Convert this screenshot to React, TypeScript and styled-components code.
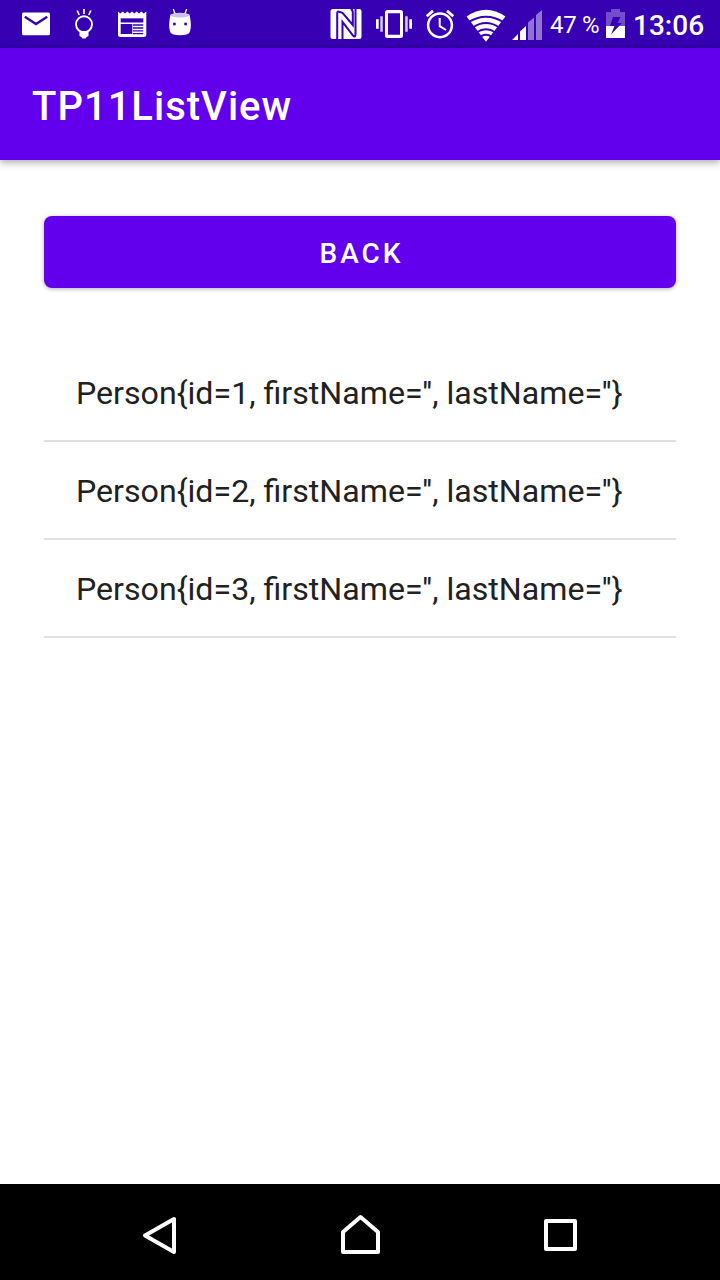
import React from "react";
import styled, { createGlobalStyle } from "styled-components";

const GlobalStyle = createGlobalStyle`
  * { box-sizing: border-box; }
  body { margin: 0; background: #fff; font-family: Roboto, "Noto Sans", sans-serif; }
`;

const Screen = styled.div`
  width: 720px;
  height: 1280px;
  display: flex;
  flex-direction: column;
  background: #fff;
  overflow: hidden;
`;

const StatusBar = styled.header`
  height: 48px;
  flex: none;
  display: flex;
  align-items: center;
  padding: 0 16px 0 12px;
  background: #3700b3;
  color: #fff;
`;

const IconGroup = styled.div<{ $push?: boolean }>`
  display: flex;
  margin-left: ${(p) => (p.$push ? "auto" : "0")};
`;

const Glyph = styled.svg`
  display: block;
  flex: none;
`;

const BatteryLevel = styled.span`
  width: 56px;
  font-size: 24px;
  letter-spacing: -0.3px;
  line-height: 48px;
  white-space: nowrap;
  padding-top: 1px;
`;

const Clock = styled.span`
  width: 71px;
  font-size: 28px;
  font-weight: 500;
  line-height: 48px;
  padding-top: 4px;
  white-space: nowrap;
`;

const AppBar = styled.div`
  height: 112px;
  flex: none;
  display: flex;
  align-items: center;
  padding: 6px 32px 0;
  background: #6200ee;
  box-shadow: 0 2px 8px rgba(0, 0, 0, 0.38);
`;

const Title = styled.h1`
  margin: 0;
  font-size: 40px;
  font-weight: 500;
  letter-spacing: 1px;
  line-height: 48px;
  color: #fff;
`;

const Content = styled.main`
  flex: 1;
  display: flex;
  flex-direction: column;
  padding: 56px 44px 0;
`;

const Button = styled.button`
  height: 72px;
  flex: none;
  border: 0;
  border-radius: 8px;
  padding: 2px 0 0 3px;
  background: #6200ee;
  color: #fff;
  font: 500 28px Roboto, sans-serif;
  letter-spacing: 3px;
  box-shadow: 0 1px 4px rgba(0, 0, 0, 0.32);
`;

const List = styled.ul`
  margin: 56px 0 0;
  padding: 0;
  list-style: none;
`;

const Row = styled.li`
  height: 98px;
  padding: 2px 32px 0;
  border-bottom: 2px solid #e0e0e0;
  font-size: 32.15px;
  line-height: 94px;
  color: #212121;
  white-space: nowrap;
`;

const NavBar = styled.nav`
  height: 96px;
  flex: none;
  display: flex;
  justify-content: center;
  background: #000;
`;

interface IconProps {
  x: number;
  w: number;
  children: React.ReactNode;
}

const StatusIcon = ({ x, w, children }: IconProps) => (
  <Glyph width={w} height={48} viewBox={`${x} 0 ${w} 48`} fill="#fff">
    {children}
  </Glyph>
);

const NavIcon = ({ x, w, children }: IconProps) => (
  <Glyph
    width={w}
    height={96}
    viewBox={`${x} 1184 ${w} 96`}
    fill="none"
    stroke="#fff"
    strokeWidth={4}
    strokeLinejoin="round"
  >
    {children}
  </Glyph>
);

const people = [1, 2, 3].map((id) => ({ id, firstName: "", lastName: "" }));

export default function App() {
  return (
    <Screen>
      <GlobalStyle />
      <StatusBar>
        <IconGroup>
          <StatusIcon x={12} w={48}>
            <rect x="22" y="12.5" width="28" height="22.7" rx="1.5" />
            <path d="M24.800 16.700 36 24l11.200-7.300" fill="none" stroke="#3700b3" strokeWidth="2.400" />
          </StatusIcon>
          <StatusIcon x={60} w={48}>
            <circle cx="84" cy="24.300" r="8" fill="none" stroke="#fff" strokeWidth="1.900" />
            <path d="M79.500 31h9v5l-2.200 1.200-.6 1.300h-3.400l-.6-1.300-2.200-1.200z" />
            <path d="M84 9v5M77.200 10.500l2 4.500M90.800 10.500l-2 4.500" fill="none" stroke="#fff" strokeWidth="1.700" />
          </StatusIcon>
          <StatusIcon x={108} w={48}>
            <path
              fillRule="evenodd"
              d="M118 11.5l2.3 2 2.4-2 2.3 2 2.4-2 2.3 2 2.3-2 2.3 2 2.4-2 2.3 2 2.4-2 2.3 2 2.6-2V34.500a2.500 2.500 0 0 1-2.500 2.500H120.500a2.500 2.500 0 0 1-2.500-2.500zM120.700 18v4.500h22.600V18zM120.700 24v10h11.600V24zM133 24.300v1.500h10.300v-1.500zM133 27.300v1.400h10.300v-1.400zM133 30.200v1.400h10.300v-1.400zM133 33v1.300h10.300V33z"
            />
            <path d="M120.700 18h22.600v1h-22.600z" opacity=".35" />
          </StatusIcon>
          <StatusIcon x={156} w={48}>
            <path d="M173.300 9l2 5.500M186.700 9l-2 5.500" stroke="#fff" strokeWidth="1.300" />
            <path d="M170.500 14.500q9.500-3.500 19 0c1.500 7 2 13 .3 17.500q-1.400 3.200-9.800 3.200t-9.800-3.200c-1.700-4.500-1.200-10.500.3-17.500z" />
            <ellipse cx="180" cy="15.200" rx="9.300" ry="2.300" fill="#cdbfec" />
            <rect x="173.100" y="22.700" width="2.600" height="2.600" fill="#3700b3" />
            <rect x="184.300" y="22.700" width="2.600" height="2.600" fill="#3700b3" />
          </StatusIcon>
        </IconGroup>
        <IconGroup $push>
          <StatusIcon x={322} w={48}>
            <rect x="330.500" y="9" width="31" height="30" rx="2.500" />
            <path
              d="M337.200 39V14q0-3 1.800-2.200l3.500 1L352.800 25V12q0-2-2-3M342.500 39q0-1 0-3V22l10.500 13.500q2.500 2.500 2.500-1.500V9"
              fill="none"
              stroke="#3700b3"
              strokeWidth="2"
            />
          </StatusIcon>
          <StatusIcon x={370} w={48}>
            <path
              fillRule="evenodd"
              d="M387.500 10h13q2.500 0 2.500 2.500v23q0 2.500-2.500 2.500h-13q-2.500 0-2.500-2.500v-23q0-2.500 2.500-2.500zM388 13.300v21.400h12V13.300z"
            />
            <path d="M380.300 16.300h2.500v15.400h-2.500zM405.200 16.300h2.500v15.400h-2.500z" opacity=".8" />
            <path d="M376 19.300h2.700v9.400H376zM409.300 19.300h2.700v9.400h-2.700z" />
          </StatusIcon>
          <StatusIcon x={418} w={44}>
            <g fill="none" stroke="#fff">
              <circle cx="440" cy="25.300" r="11.900" strokeWidth="2.500" />
              <path d="M439.700 18v8.200l6.300 3.800" strokeWidth="2" />
              <path d="M426.700 16.200l6.300-5.300M453.300 16.200l-6.300-5.300" strokeWidth="2.800" />
            </g>
          </StatusIcon>
          <StatusIcon x={462} w={50}>
            <path d="M466.600 16.500Q486 3 505.400 16.500L486 41.800z" />
            <g fill="none" stroke="#3700b3" strokeWidth="1.800">
              <path d="M468 22.500q18-11.500 36 0" />
              <path d="M472.500 27.500q13.500-9 27 0" />
              <path d="M476.500 32.500q9.500-6.500 19 0" />
              <path d="M480 37q6-4.500 12 0" />
            </g>
          </StatusIcon>
          <StatusIcon x={512} w={38}>
            <path d="M512 40l6-6v6zM520 31.500l6-5.500v14h-6z" />
            <path d="M528 22.500l6-5V40h-6zM536 15l6-5v30h-6z" opacity=".45" />
          </StatusIcon>
        </IconGroup>
        <BatteryLevel>47 %</BatteryLevel>
        <StatusIcon x={606} w={27}>
          <path d="M606 12h5V9h9v3h5v14h-19z" opacity=".3" />
          <path d="M606 26h19v12h-19z" />
          <path d="M613 17h7.500l-3 6h4.500l-11 11.500 3.500-8.500H610z" fill="#3700b3" />
        </StatusIcon>
        <Clock>13:06</Clock>
      </StatusBar>
      <AppBar>
        <Title>TP11ListView</Title>
      </AppBar>
      <Content>
        <Button>BACK</Button>
        <List>
          {people.map((p) => (
            <Row key={p.id}>{`Person{id=${p.id}, firstName='${p.firstName}', lastName='${p.lastName}'}`}</Row>
          ))}
        </List>
      </Content>
      <NavBar>
        <NavIcon x={60} w={200}>
          <path d="M174 1219v33l-29-16.500z" />
        </NavIcon>
        <NavIcon x={260} w={200}>
          <path d="M343 1252v-20l17.500-15 17.500 15v20z" />
        </NavIcon>
        <NavIcon x={460} w={200}>
          <path d="M546 1221h29v28h-29z" />
        </NavIcon>
      </NavBar>
    </Screen>
  );
}
